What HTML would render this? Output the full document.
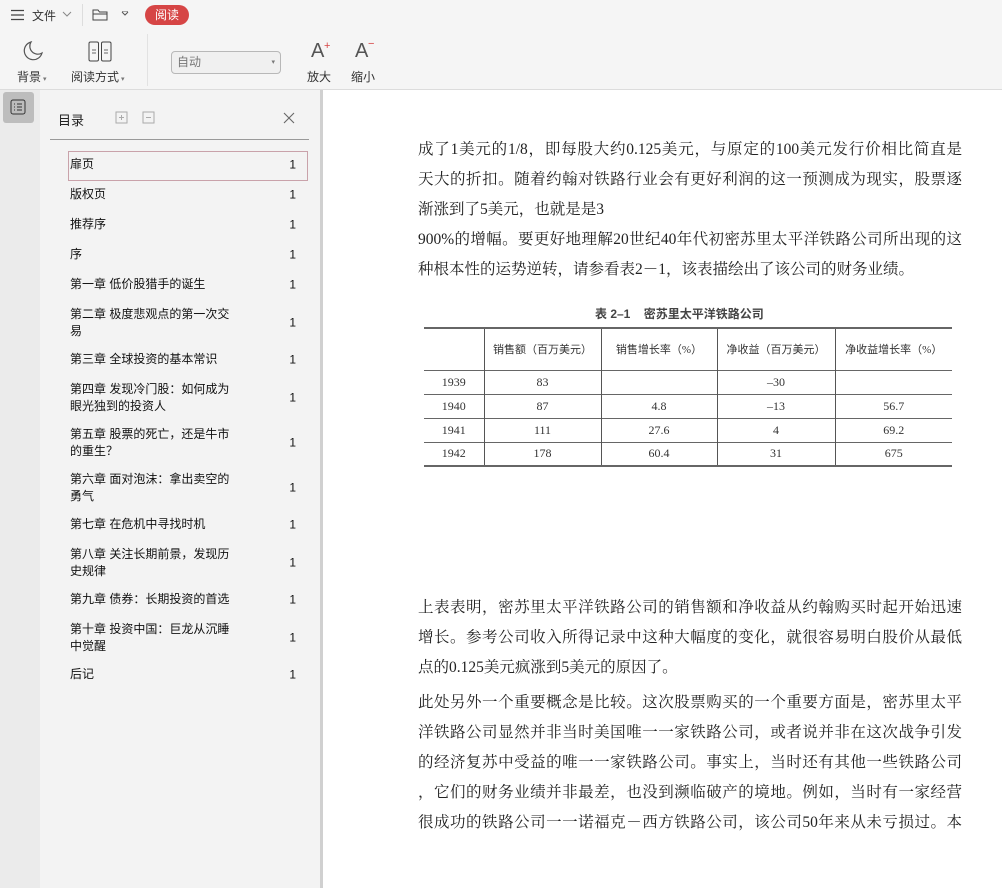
<!DOCTYPE html>
<html><head><meta charset="utf-8"><style>
*{margin:0;padding:0;box-sizing:border-box}
body{width:1002px;height:888px;overflow:hidden;background:#fff;font-family:"Liberation Sans","Noto Sans CJK SC",sans-serif;color:#222;position:relative}
.top{position:absolute;left:0;top:0;width:1002px;height:90px;background:#f5f5f5;border-bottom:1px solid #dcdcdc}
.abs{position:absolute}
.lbl{font-size:12px;color:#333}
.left{position:absolute;left:0;top:90px;width:40px;height:798px;background:#ebebeb}
.side{position:absolute;left:40px;top:90px;width:280px;height:798px;background:#f3f3f3}
.sep{position:absolute;left:320px;top:90px;width:3px;height:798px;background:#d0d0d0}
.item{position:absolute;left:30px;width:238px;font-size:12px;line-height:17px;color:#111}
.item .n{position:absolute;right:12px;top:50%;transform:translateY(-50%)}
.txt{position:absolute;left:418px;width:544px;font-family:"Liberation Serif","Noto Serif CJK SC",serif;font-size:15.5px;line-height:30px;color:#222}
.txt div{text-align:justify;text-align-last:justify;height:30px;overflow:hidden}
.txt div.l{text-align-last:left}
table{border-collapse:collapse;font-family:"Liberation Serif","Noto Sans CJK SC",serif;font-size:12px;color:#333}
td{border-left:1px solid #555;text-align:center;height:24px}
td:first-child{border-left:none}
</style></head><body>
<div class="top">
  <svg class="abs" style="left:11px;top:9px" width="14" height="12"><path d="M0 1.5h13M0 6h13M0 10.5h13" stroke="#444" stroke-width="1.2"/></svg>
  <div class="abs lbl" style="left:32px;top:7px;font-size:12px">文件</div>
  <svg class="abs" style="left:62px;top:11px" width="10" height="6"><path d="M1 1l4 4 4-4" stroke="#888" fill="none"/></svg>
  <div class="abs" style="left:82px;top:4px;width:1px;height:22px;background:#ddd"></div>
  <svg class="abs" style="left:92px;top:8px" width="16" height="13"><path d="M1 2h5l1.5 2H15v8H1z M1 6h14" stroke="#444" fill="none"/></svg>
  <svg class="abs" style="left:121px;top:11px" width="8" height="6"><path d="M1 1l3 3 3-3M1 0h6" stroke="#555" fill="none"/></svg>
  <div class="abs" style="left:145px;top:5px;width:44px;height:20px;border-radius:10px;background:#d64545;color:#fff;font-size:12px;line-height:20px;text-align:center">阅读</div>
  <svg class="abs" style="left:22px;top:40px" width="22" height="22"><path d="M9 2a9 9 0 1 0 11 11A8 8 0 0 1 9 2z" stroke="#555" fill="none" stroke-width="1.2"/></svg>
  <div class="abs lbl" style="left:17px;top:68px">背景<span style="font-size:7px;color:#777"> ▾</span></div>
  <svg class="abs" style="left:88px;top:41px" width="24" height="21"><rect x="1" y="1" width="9.5" height="19" rx="1.5" stroke="#444" fill="none"/><rect x="13.5" y="1" width="9.5" height="19" rx="1.5" stroke="#444" fill="none"/><path d="M4 9h4M4 12h4M16 9h4M16 12h4" stroke="#666"/></svg>
  <div class="abs lbl" style="left:71px;top:68px">阅读方式<span style="font-size:7px;color:#777"> ▾</span></div>
  <div class="abs" style="left:147px;top:34px;width:1px;height:52px;background:#e2e2e2"></div>
  <div class="abs" style="left:171px;top:51px;width:110px;height:23px;border:1px solid #b8b8b8;border-radius:4px;background:#f0f0f0;font-size:12px;color:#777;line-height:21px;padding-left:5px">自动<span style="position:absolute;right:5px;font-size:7px">▾</span></div>
  <div class="abs" style="left:311px;top:40px;font-size:20px;color:#555;font-weight:300">A</div><div class="abs" style="left:324px;top:40px;font-size:11px;color:#d64545">+</div>
  <div class="abs lbl" style="left:307px;top:68px">放大</div>
  <div class="abs" style="left:355px;top:40px;font-size:20px;color:#555;font-weight:300">A</div><div class="abs" style="left:368px;top:38px;font-size:11px;color:#d64545">−</div>
  <div class="abs lbl" style="left:351px;top:68px">缩小</div>
</div>
<div class="left"><div class="abs" style="left:3px;top:2px;width:31px;height:31px;background:#bdbdbd;border-radius:3px"></div>
<svg class="abs" style="left:10px;top:9px" width="16" height="16"><rect x="1" y="1" width="14" height="14" rx="2" stroke="#333" fill="none"/><path d="M4 5h1M7 5h5M4 8h1M7 8h5M4 11h1M7 11h5" stroke="#333"/></svg></div>
<div class="side">
  <div class="abs" style="left:18px;top:20px;font-size:13px;color:#222">目录</div>
  <svg class="abs" style="left:74px;top:21px" width="14" height="14"><rect x="2" y="1" width="11" height="11" stroke="#aaa" fill="none"/><path d="M7.5 4v5M5 6.5h5" stroke="#aaa"/></svg>
  <svg class="abs" style="left:101px;top:21px" width="14" height="14"><rect x="2" y="1" width="11" height="11" stroke="#aaa" fill="none"/><path d="M5 6.5h5" stroke="#aaa"/></svg>
  <svg class="abs" style="left:243px;top:22px" width="12" height="12"><path d="M1 1l10 10M11 1L1 11" stroke="#666" stroke-width="1.1"/></svg>
  <div class="abs" style="left:10px;top:49px;width:259px;height:1px;background:#999"></div>
  <div class="abs" style="left:28px;top:61px;width:240px;height:30px;border:1px solid #c9a2aa"></div>
  <div class="item" style="top:66px">扉页<span class="n">1</span></div>
  <div class="item" style="top:96px">版权页<span class="n">1</span></div>
  <div class="item" style="top:126px">推荐序<span class="n">1</span></div>
  <div class="item" style="top:156px">序<span class="n">1</span></div>
  <div class="item" style="top:186px">第一章 低价股猎手的诞生<span class="n">1</span></div>
  <div class="item" style="top:216px">第二章 极度悲观点的第一次交<br>易<span class="n">1</span></div>
  <div class="item" style="top:261px">第三章 全球投资的基本常识<span class="n">1</span></div>
  <div class="item" style="top:291px">第四章 发现冷门股：如何成为<br>眼光独到的投资人<span class="n">1</span></div>
  <div class="item" style="top:336px">第五章 股票的死亡，还是牛市<br>的重生？<span class="n">1</span></div>
  <div class="item" style="top:381px">第六章 面对泡沫：拿出卖空的<br>勇气<span class="n">1</span></div>
  <div class="item" style="top:426px">第七章 在危机中寻找时机<span class="n">1</span></div>
  <div class="item" style="top:456px">第八章 关注长期前景，发现历<br>史规律<span class="n">1</span></div>
  <div class="item" style="top:501px">第九章 债券：长期投资的首选<span class="n">1</span></div>
  <div class="item" style="top:531px">第十章 投资中国：巨龙从沉睡<br>中觉醒<span class="n">1</span></div>
  <div class="item" style="top:576px">后记<span class="n">1</span></div>
</div>
<div class="sep"></div>
<div class="txt" style="top:135px">
<div>成了1美元的1/8，即每股大约0.125美元，与原定的100美元发行价相比简直是</div>
<div>天大的折扣。随着约翰对铁路行业会有更好利润的这一预测成为现实，股票逐</div>
<div class="l">渐涨到了5美元，也就是是3</div>
<div>900%的增幅。要更好地理解20世纪40年代初密苏里太平洋铁路公司所出现的这</div>
<div class="l">种根本性的运势逆转，请参看表2－1，该表描绘出了该公司的财务业绩。</div>
</div>
<div class="abs" style="left:595px;top:305px;font-size:12px;font-weight:bold;color:#444">表 2–1&nbsp;&nbsp;&nbsp;&nbsp;密苏里太平洋铁路公司</div>
<table class="abs" style="left:424px;top:327px;width:528px;border-top:2px solid #666;border-bottom:2px solid #666">
<tr style="height:42px;border-bottom:1px solid #666"><td style="width:60px"></td><td style="width:117px;font-size:11px">销售额（百万美元）</td><td style="width:116px;font-size:11px">销售增长率（%）</td><td style="width:118px;font-size:11px">净收益（百万美元）</td><td style="font-size:11px">净收益增长率（%）</td></tr>
<tr style="border-bottom:1px solid #666"><td>1939</td><td>83</td><td></td><td>–30</td><td></td></tr>
<tr style="border-bottom:1px solid #666"><td>1940</td><td>87</td><td>4.8</td><td>–13</td><td>56.7</td></tr>
<tr style="border-bottom:1px solid #666"><td>1941</td><td>111</td><td>27.6</td><td>4</td><td>69.2</td></tr>
<tr><td>1942</td><td>178</td><td>60.4</td><td>31</td><td>675</td></tr>
</table>
<div class="txt" style="top:593px">
<div>上表表明，密苏里太平洋铁路公司的销售额和净收益从约翰购买时起开始迅速</div>
<div>增长。参考公司收入所得记录中这种大幅度的变化，就很容易明白股价从最低</div>
<div class="l">点的0.125美元疯涨到5美元的原因了。</div>
</div>
<div class="txt" style="top:688px">
<div>此处另外一个重要概念是比较。这次股票购买的一个重要方面是，密苏里太平</div>
<div>洋铁路公司显然并非当时美国唯一一家铁路公司，或者说并非在这次战争引发</div>
<div>的经济复苏中受益的唯一一家铁路公司。事实上，当时还有其他一些铁路公司</div>
<div>，它们的财务业绩并非最差，也没到濒临破产的境地。例如，当时有一家经营</div>
<div>很成功的铁路公司一一诺福克－西方铁路公司，该公司50年来从未亏损过。本</div>
</div>
</body></html>
